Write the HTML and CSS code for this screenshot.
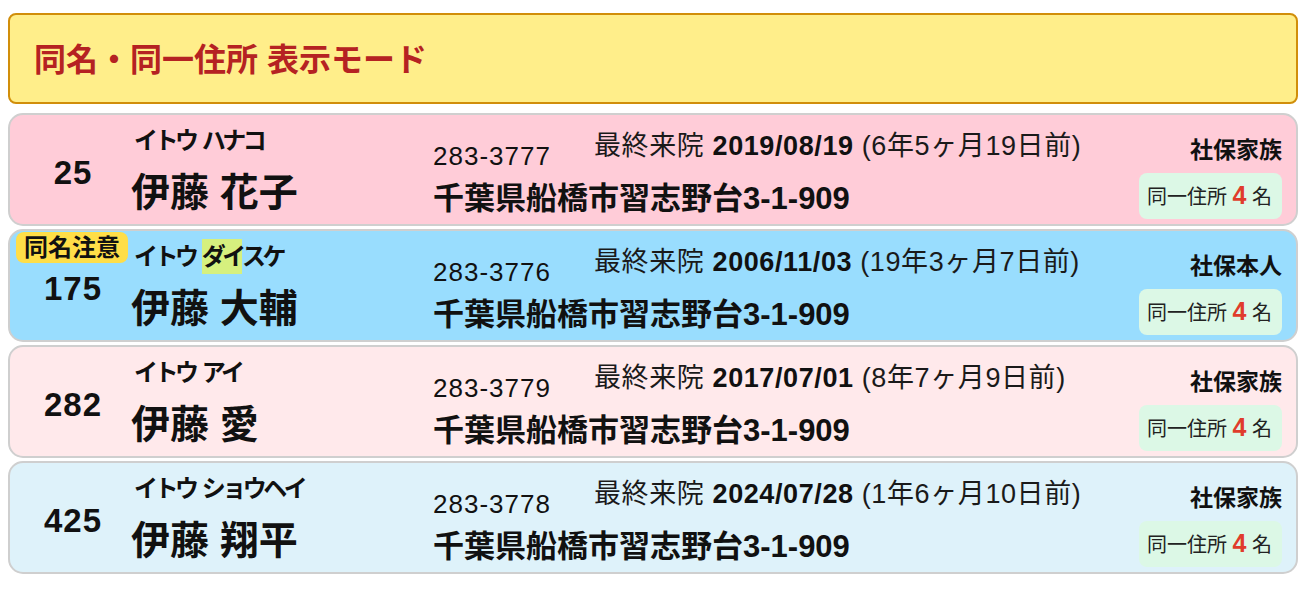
FILE: index.html
```html
<!DOCTYPE html>
<html lang="ja">
<head>
<meta charset="utf-8">
<title>同名・同一住所 表示モード</title>
<link rel="stylesheet" href="styles.css">
</head>
<body>
<div class="page">
  <header class="mode-bar">
    <h1 class="mode-title">同名・同一住所 表示モード</h1>
  </header>
  <div class="list">
    <div class="card card-pink">
      <div class="pid">25</div>
      <div class="names">
        <div class="kana">イトウ ハナコ</div>
        <div class="kanji">伊藤 花子</div>
      </div>
      <div class="info">
        <div class="info-top">
          <span class="tel">283-3777</span>
          <span class="visit">最終来院 <b>2019/08/19</b> (6年5ヶ月19日前)</span>
        </div>
        <div class="addr">千葉県船橋市習志野台3-1-909</div>
      </div>
      <div class="side">
        <div class="ins">社保家族</div>
        <div class="same">同一住所 <b class="same-num">4</b> 名</div>
      </div>
    </div>

    <div class="card card-blue">
      <span class="warn">同名注意</span>
      <div class="pid">175</div>
      <div class="names">
        <div class="kana">イトウ <span class="hl">ダイ</span>スケ</div>
        <div class="kanji">伊藤 大輔</div>
      </div>
      <div class="info">
        <div class="info-top">
          <span class="tel">283-3776</span>
          <span class="visit">最終来院 <b>2006/11/03</b> (19年3ヶ月7日前)</span>
        </div>
        <div class="addr">千葉県船橋市習志野台3-1-909</div>
      </div>
      <div class="side">
        <div class="ins">社保本人</div>
        <div class="same">同一住所 <b class="same-num">4</b> 名</div>
      </div>
    </div>

    <div class="card card-rose">
      <div class="pid">282</div>
      <div class="names">
        <div class="kana">イトウ アイ</div>
        <div class="kanji">伊藤 愛</div>
      </div>
      <div class="info">
        <div class="info-top">
          <span class="tel">283-3779</span>
          <span class="visit">最終来院 <b>2017/07/01</b> (8年7ヶ月9日前)</span>
        </div>
        <div class="addr">千葉県船橋市習志野台3-1-909</div>
      </div>
      <div class="side">
        <div class="ins">社保家族</div>
        <div class="same">同一住所 <b class="same-num">4</b> 名</div>
      </div>
    </div>

    <div class="card card-sky">
      <div class="pid">425</div>
      <div class="names">
        <div class="kana">イトウ ショウヘイ</div>
        <div class="kanji">伊藤 翔平</div>
      </div>
      <div class="info">
        <div class="info-top">
          <span class="tel">283-3778</span>
          <span class="visit">最終来院 <b>2024/07/28</b> (1年6ヶ月10日前)</span>
        </div>
        <div class="addr">千葉県船橋市習志野台3-1-909</div>
      </div>
      <div class="side">
        <div class="ins">社保家族</div>
        <div class="same">同一住所 <b class="same-num">4</b> 名</div>
      </div>
    </div>
  </div>
</div>
</body>
</html>
```

FILE: styles.css
```css
* { box-sizing: border-box; }

html, body {
  margin: 0;
  padding: 0;
  background: #ffffff;
}

body {
  font-family: "Liberation Sans", "Noto Sans CJK JP", sans-serif;
  color: #111111;
}

.page {
  width: 1290px;
  margin-left: 8px;
  padding-top: 13px;
}

.mode-bar {
  height: 91px;
  background: #ffee8a;
  border: 2px solid #d18e0a;
  border-radius: 8px;
  display: flex;
  align-items: center;
  padding-left: 24px;
}

.mode-title {
  margin: 2px 0 0;
  font-size: 32px;
  line-height: 40px;
  font-weight: 700;
  color: #b52222;
}

.list {
  margin-top: 9px;
  display: flex;
  flex-direction: column;
  gap: 3px;
}

.card {
  position: relative;
  height: 113px;
  border: 2px solid #cfcfcf;
  border-radius: 15px;
  display: grid;
  grid-template-columns: 121px 302px 1fr auto;
  padding-right: 14px;
}

.card-pink { background: #ffccd8; }
.card-blue { background: #99ddfe; }
.card-rose { background: #ffe9eb; }
.card-sky  { background: #def2fa; }

.warn {
  position: absolute;
  left: 6px;
  top: 1px;
  height: 31px;
  padding: 0 8px;
  background: #ffde48;
  border-radius: 8px;
  font-size: 24px;
  line-height: 31px;
  font-weight: 700;
  color: #111111;
}

.pid {
  padding-top: 38px;
  padding-left: 5px;
  text-align: center;
  font-size: 33px;
  line-height: 40px;
  font-weight: 700;
  letter-spacing: 1px;
}

.names {
  padding-top: 11px;
}

.kana {
  font-size: 24px;
  line-height: 30px;
  font-weight: 600;
  letter-spacing: -3.5px;
  word-spacing: 3px;
  white-space: nowrap;
  padding-left: 3px;
}

.hl {
  background: #d6f07e;
  padding: 4px 0;
}

.kanji {
  margin-top: 14px;
  font-size: 39px;
  line-height: 46px;
  font-weight: 700;
  white-space: nowrap;
}

.info {
  padding-top: 14px;
}

.info-top {
  display: flex;
  align-items: flex-start;
}

.tel {
  width: 161px;
  margin-top: 12px;
  font-size: 26px;
  line-height: 30px;
  letter-spacing: 1px;
}

.visit {
  font-size: 27px;
  line-height: 34px;
  letter-spacing: 0.6px;
  color: #1a1a1a;
  white-space: nowrap;
}

.visit b { font-weight: 700; color: #111111; }

.addr {
  margin-top: 8px;
  font-size: 31px;
  line-height: 40px;
  font-weight: 700;
  white-space: nowrap;
}

.side {
  padding-top: 20px;
  display: flex;
  flex-direction: column;
  align-items: flex-end;
}

.ins {
  font-size: 23px;
  line-height: 30px;
  font-weight: 700;
}

.same {
  margin-top: 8px;
  padding: 7px 10px 7px 8px;
  background: #dcf8e6;
  border-radius: 8px;
  font-size: 20px;
  line-height: 30px;
  color: #222222;
  white-space: nowrap;
}

.same-num {
  font-size: 25px;
  font-weight: 700;
  color: #e03c2c;
}
```
